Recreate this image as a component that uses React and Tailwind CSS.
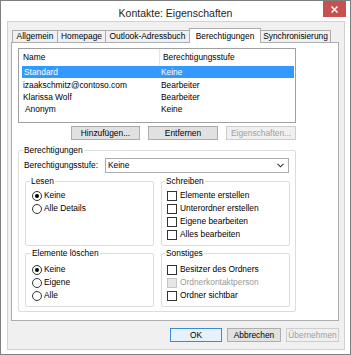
import React from "react";

const Radio = ({label, checked}) => (
    <div className="flex items-center h-[13px] gap-[2px]">
        <span className="w-[10px] h-[10px] rounded-full border border-[#333] bg-white flex items-center justify-center">
            {checked && <span className="w-[4px] h-[4px] rounded-full bg-black"/>}
        </span>
        <span>{label}</span>
    </div>
);

const Check = ({label, disabled}) => (
    <div className="flex items-center h-[13px] gap-[3px]">
        <span className={disabled
            ? "w-[10px] h-[10px] border border-[#c6c6c6] bg-[#e6e6e6]"
            : "w-[10px] h-[10px] border border-[#333] bg-white"}/>
        <span className={disabled ? "text-[#9a9a9a]" : ""}>{label}</span>
    </div>
);

const Btn = ({children, w, disabled, primary}) => (
    <button
        type="button"
        className={
            "h-[14px] border flex items-center justify-center leading-[12px] " + w + " " +
            (disabled
                ? "bg-[#f0f0f0] border-[#cdcdcd] text-[#a0a0a0]"
                : primary
                    ? "bg-[#e5f1fb] border-[#3c8ad6] text-black"
                    : "bg-[#e1e1e1] border-[#adadad] text-black")
        }
    >
        {children}
    </button>
);

const Group = ({title, className, children, legendClass}) => (
    <fieldset className={"border border-[#dcdcdc] rounded-[2px] " + className}>
        <legend className={"px-[1px] leading-[10px] " + (legendClass || "")}>{title}</legend>
        {children}
    </fieldset>
);

const tabs = [
    {label: "Allgemein", w: "w-[46px]"},
    {label: "Homepage", w: "w-[49px]"},
    {label: "Outlook-Adressbuch", w: "w-[85px]"},
    {label: "Berechtigungen", w: "w-[72px]", active: true},
    {label: "Synchronisierung", w: "w-[71px]"},
];

const rows = [
    {name: "izaakschmitz@contoso.com", level: "Bearbeiter"},
    {name: "Klarissa Wolf", level: "Bearbeiter"},
    {name: " Anonym", level: "Keine", indent: true},
];

export default function App() {
    return (
        <div className="w-[351px] h-[355px] bg-white border border-[#7f7f7f] flex flex-col overflow-hidden text-black font-['Liberation_Sans',Arial,sans-serif] text-[8.4px]">
            {/* Titelleiste */}
            <div className="h-[20px] shrink-0 grid grid-cols-[1fr_auto_1fr]">
                <div/>
                <div className="text-[10.5px] leading-[20px] text-[#1e1e1e] pt-[2px]">Kontakte: Eigenschaften</div>
                <div className="flex justify-end items-start pr-[4px]">
                    <div className="w-[23px] h-[16px] bg-[#c75050] flex items-center justify-center">
                        <svg width="7" height="7" viewBox="0 0 7 7">
                            <path d="M0.5 0.5L6.5 6.5M6.5 0.5L0.5 6.5" stroke="#fff" strokeWidth="1.5"/>
                        </svg>
                    </div>
                </div>
            </div>

            <div className="flex-1 mx-[5px] mb-[4px] ml-[6px] bg-[#f0f0f0] border border-[#d2d2d2] pl-[3px] pt-[6px] flex flex-col">
                {/* Reiter */}
                <div className="flex items-end pl-[1px]">
                    {tabs.map((t, i) => t.active ? (
                        <div key={t.label}
                             className={"relative z-10 -mb-px h-[15px] pt-[1px] leading-[12px] text-center bg-white border border-b-0 border-[#adadad] -ml-px " + t.w}>
                            {t.label}
                        </div>
                    ) : (
                        <div key={t.label}
                             className={"h-[12px] leading-[11px] text-center bg-[#f0f0f0] border border-b-0 border-[#adadad] " + (i > 0 ? "-ml-px " : "") + t.w}>
                            {t.label}
                        </div>
                    ))}
                </div>

                {/* Reiterinhalt */}
                <div className="w-[328px] bg-white border border-[#adadad] pl-[6px] pt-[5px] pb-[8px]">
                    <div className="w-[278px] h-[75px] border border-[#a0a0a0] bg-white">
                        <div className="h-[16px] flex items-center">
                            <div className="w-[141px] h-full pl-[4px] flex items-center border-r border-[#e5e5e5]">Name</div>
                            <div className="pl-[3px]">Berechtigungsstufe</div>
                        </div>
                        <div className="mt-[1px] ml-[3px] mr-[1px] h-[12px] bg-[#3399ff] text-white grid grid-cols-[139px_1fr] items-center leading-[12px]">
                            <span className="pl-[2px]">Standard</span>
                            <span>Keine</span>
                        </div>
                        <div className="mt-[1px]">
                            {rows.map(r => (
                                <div key={r.name} className="ml-[3px] h-[12px] grid grid-cols-[139px_1fr] items-center leading-[12px]">
                                    <span className={r.indent ? "pl-[3px]" : "pl-[1px]"}>{r.name.trim()}</span>
                                    <span>{r.level}</span>
                                </div>
                            ))}
                        </div>
                    </div>

                    <div className="w-[278px] mt-[3px] flex justify-end gap-[8px]">
                        <Btn w="w-[69px]">Hinzufügen...</Btn>
                        <Btn w="w-[70px]">Entfernen</Btn>
                        <Btn w="w-[70px]" disabled>Eigenschaften...</Btn>
                    </div>

                    <Group title="Berechtigungen" className="w-[278px] mt-[5px] pl-[5px] pb-[4px]" legendClass="-ml-[1px]">
                        <div className="pt-[3px] flex items-center h-[18px]">
                            <div className="w-[81px]">Berechtigungsstufe:</div>
                            <div className="w-[184px] h-[15px] border border-[#acacac] bg-white flex items-center justify-between pl-[2px] pr-[4px]">
                                <span>Keine</span>
                                <svg width="7" height="5" viewBox="0 0 7 5">
                                    <path d="M0.5 0.8L3.5 3.8L6.5 0.8" fill="none" stroke="#333" strokeWidth="1.1"/>
                                </svg>
                            </div>
                        </div>

                        <div className="mt-[3px] ml-[1px] grid grid-cols-[129px_129px] gap-x-[7px] gap-y-[2px]">
                            <Group title="Lesen" className="h-[70px] pl-[6px] pt-[3px]" legendClass="-ml-[2px]">
                                <Radio label="Keine" checked/>
                                <Radio label="Alle Details"/>
                            </Group>
                            <Group title="Schreiben" className="h-[70px] pl-[5px] pt-[3px]" legendClass="-ml-[2px]">
                                <Check label="Elemente erstellen"/>
                                <Check label="Unterordner erstellen"/>
                                <Check label="Eigene bearbeiten"/>
                                <Check label="Alles bearbeiten"/>
                            </Group>
                            <Group title="Elemente löschen" className="h-[59px] pl-[6px] pt-[5px]" legendClass="-ml-[1px]">
                                <Radio label="Keine" checked/>
                                <Radio label="Eigene"/>
                                <Radio label="Alle"/>
                            </Group>
                            <Group title="Sonstiges" className="h-[59px] pl-[5px] pt-[5px]" legendClass="-ml-[2px]">
                                <Check label="Besitzer des Ordners"/>
                                <Check label="Ordnerkontaktperson" disabled/>
                                <Check label="Ordner sichtbar"/>
                            </Group>
                        </div>
                    </Group>
                </div>

                {/* Schaltflächen */}
                <div className="w-[328px] mt-[7px] flex justify-end gap-[5px]">
                    <Btn w="w-[52px]" primary>OK</Btn>
                    <Btn w="w-[54px]">Abbrechen</Btn>
                    <Btn w="w-[53px]" disabled>Übernehmen</Btn>
                </div>
            </div>
        </div>
    );
}
